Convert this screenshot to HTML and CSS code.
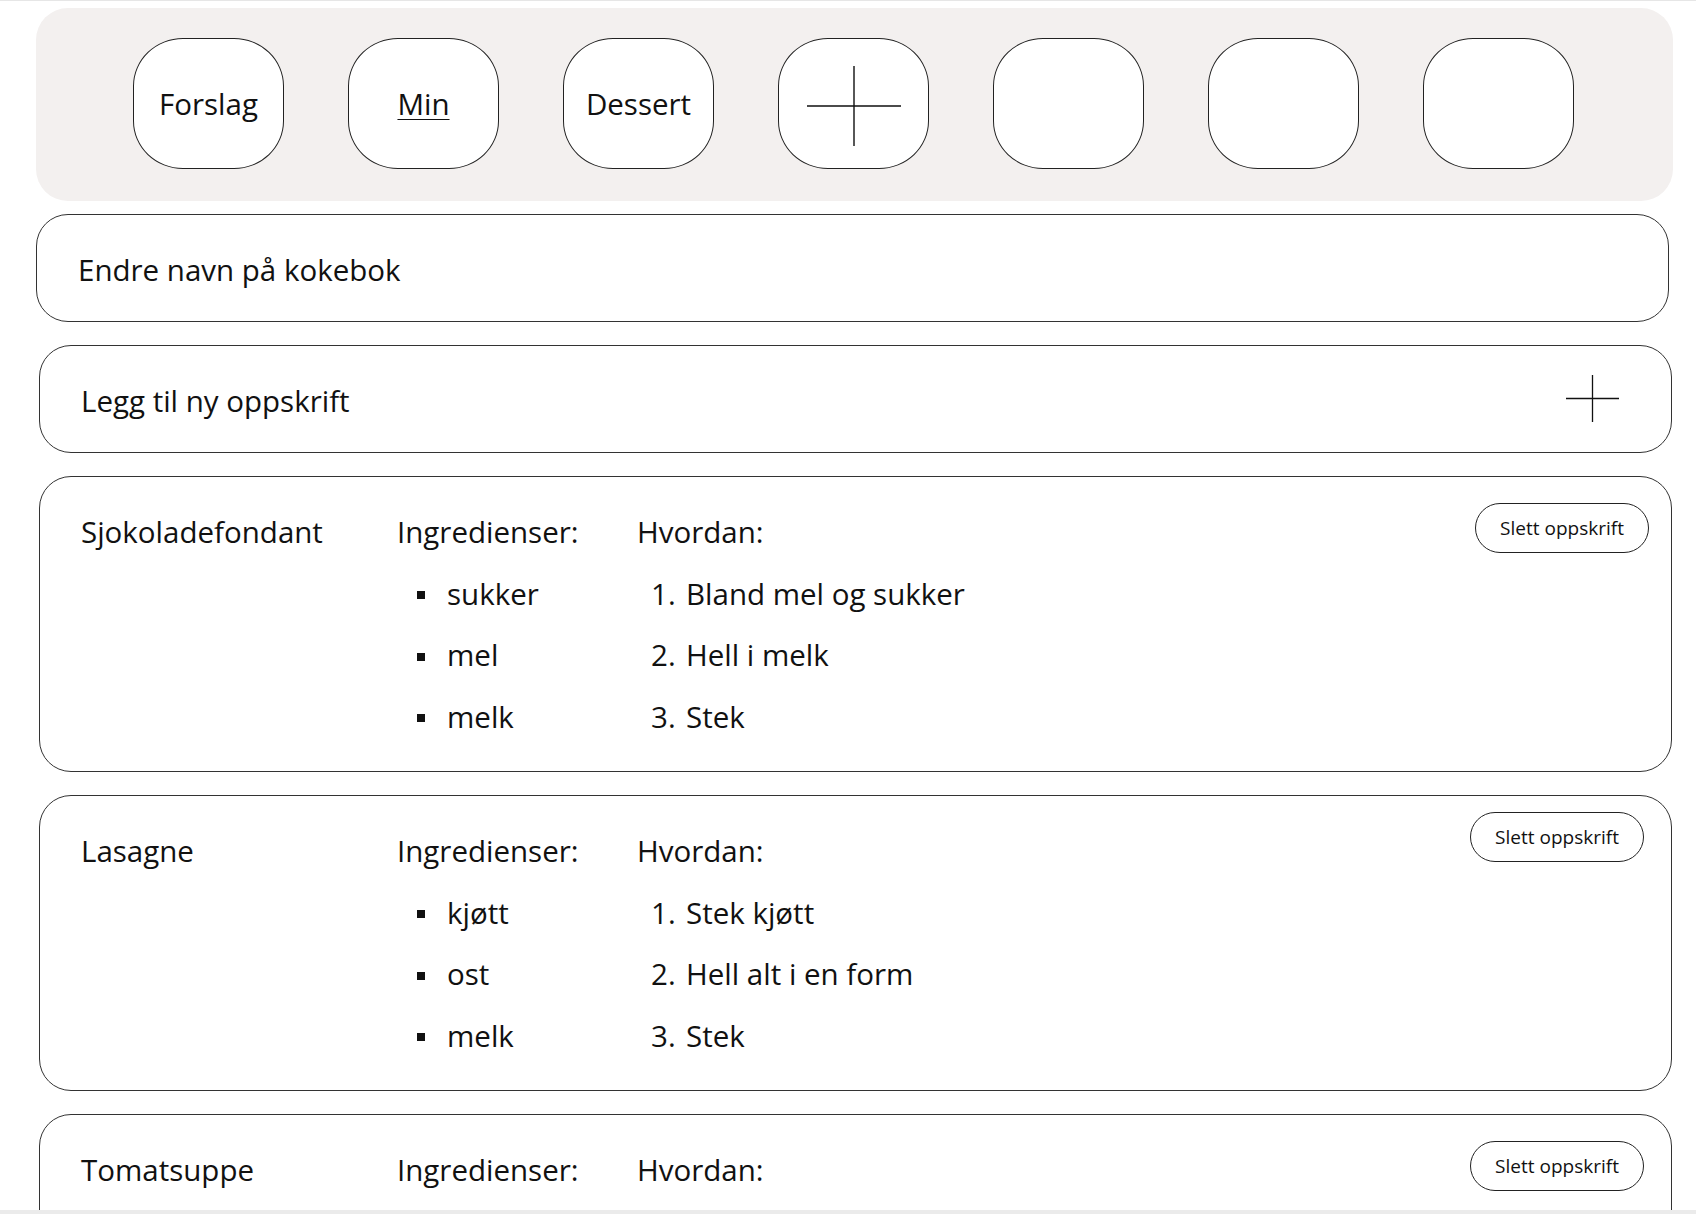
FILE: index.html
```html
<!DOCTYPE html>
<html lang="no">
<head>
<meta charset="utf-8">
<title>Kokebok</title>
<link rel="stylesheet" href="styles.css">
</head>
<body>
<div class="page">
  <nav class="tabs">
    <button class="tab">Forslag</button>
    <button class="tab"><span class="current">Min</span></button>
    <button class="tab">Dessert</button>
    <button class="tab" aria-label="Ny kokebok">
      <svg class="tab-plus" width="94" height="80" viewBox="0 0 94 80"><path d="M0 40H94M47 0V80" stroke="#111" stroke-width="1.4" fill="none"/></svg>
    </button>
    <button class="tab"></button>
    <button class="tab"></button>
    <button class="tab"></button>
  </nav>

  <div class="bar bar-rename">Endre navn på kokebok</div>

  <div class="bar bar-add">
    <span>Legg til ny oppskrift</span>
    <svg class="add-plus" width="53" height="47" viewBox="0 0 53 47"><path d="M0 23.5H53M26.5 0V47" stroke="#111" stroke-width="1.3" fill="none"/></svg>
  </div>

  <section class="card">
    <div class="col-title">Sjokoladefondant</div>
    <div class="col-ing">
      <div class="head">Ingredienser:</div>
      <ul class="ing">
        <li>sukker</li>
        <li>mel</li>
        <li>melk</li>
      </ul>
    </div>
    <div class="col-steps">
      <div class="head">Hvordan:</div>
      <ol class="steps">
        <li>Bland mel og sukker</li>
        <li>Hell i melk</li>
        <li>Stek</li>
      </ol>
    </div>
    <button class="delete">Slett oppskrift</button>
  </section>

  <section class="card">
    <div class="col-title">Lasagne</div>
    <div class="col-ing">
      <div class="head">Ingredienser:</div>
      <ul class="ing">
        <li>kjøtt</li>
        <li>ost</li>
        <li>melk</li>
      </ul>
    </div>
    <div class="col-steps">
      <div class="head">Hvordan:</div>
      <ol class="steps">
        <li>Stek kjøtt</li>
        <li>Hell alt i en form</li>
        <li>Stek</li>
      </ol>
    </div>
    <button class="delete delete-high">Slett oppskrift</button>
  </section>

  <section class="card card-last">
    <div class="col-title">Tomatsuppe</div>
    <div class="col-ing">
      <div class="head">Ingredienser:</div>
    </div>
    <div class="col-steps">
      <div class="head">Hvordan:</div>
    </div>
    <button class="delete delete-shift">Slett oppskrift</button>
  </section>
</div>
<div class="frame-bottom"></div>
</body>
</html>
```

FILE: styles.css
```css
* {
  box-sizing: border-box;
}

html {
  background: #fff;
}

body {
  margin: 0;
  border-top: 1px solid #e6e6e6;
  font-family: "Open Sans", "Noto Sans", "Liberation Sans", sans-serif;
  color: #111;
}

.page {
  padding: 7px 0 40px 36px;
}

/* top tab bar */
.tabs {
  width: 1637px;
  height: 193px;
  background: #f3f0ef;
  border-radius: 32px;
  display: flex;
  justify-content: center;
  align-items: flex-start;
  gap: 64px;
  padding-top: 30px;
  padding-right: 2px;
}

.tab {
  width: 151px;
  height: 131px;
  flex: none;
  background: #fff;
  border: 1px solid #222;
  border-radius: 50px / 48px;
  display: flex;
  align-items: center;
  justify-content: center;
  padding: 0;
  font-family: inherit;
  font-size: 29.5px;
  color: #111;
  line-height: 1;
}

.current {
  text-decoration: underline;
  text-decoration-thickness: 1px;
  text-underline-offset: 4px;
}

.tab-plus {
  display: block;
  margin-top: 4px;
}

/* wide bars */
.bar {
  width: 1633px;
  height: 108px;
  border: 1px solid #333;
  border-radius: 32px;
  display: flex;
  align-items: center;
  padding-left: 41px;
  padding-top: 3px;
  font-size: 29.5px;
}

.bar-rename {
  margin-top: 13px;
}

.bar-add {
  margin-top: 23px;
  margin-left: 3px;
  justify-content: space-between;
  padding-right: 52px;
}

.add-plus {
  display: block;
  margin-top: -5px;
}

/* recipe cards */
.card {
  width: 1633px;
  margin-top: 23px;
  margin-left: 3px;
  border: 1px solid #333;
  border-radius: 32px;
  padding: 24px 22px 24px 41px;
  display: flex;
  align-items: flex-start;
  font-size: 29.5px;
  line-height: 61.5px;
}

.card-last {
  min-height: 296px;
}

.col-title {
  width: 316px;
  flex: none;
}

.col-ing {
  width: 240px;
  flex: none;
}

.col-steps {
  flex: 1;
}

.ing,
.steps {
  list-style: none;
  margin: 0;
  padding: 0;
}

.ing li {
  display: flex;
  align-items: center;
}

.ing li::before {
  content: "";
  width: 8px;
  height: 8px;
  background: #111;
  margin-left: 20px;
  margin-right: 22px;
  margin-top: 4px;
  flex: none;
}

.steps {
  counter-reset: step;
}

.steps li {
  counter-increment: step;
}

.steps li::before {
  content: counter(step) ".";
  display: inline-block;
  width: 35px;
  margin-left: 14px;
}

.delete {
  flex: none;
  width: 174px;
  height: 50px;
  margin-top: 2px;
  background: #fff;
  border: 1px solid #222;
  border-radius: 25px;
  font-family: inherit;
  font-size: 19px;
  color: #111;
  padding: 0;
  line-height: 1;
}

.delete-high {
  margin-top: -8px;
  margin-right: 5px;
}

.delete-shift {
  margin-right: 5px;
}

.frame-bottom {
  position: fixed;
  left: 0;
  right: 0;
  bottom: 0;
  height: 4px;
  background: #ebebeb;
}
```
